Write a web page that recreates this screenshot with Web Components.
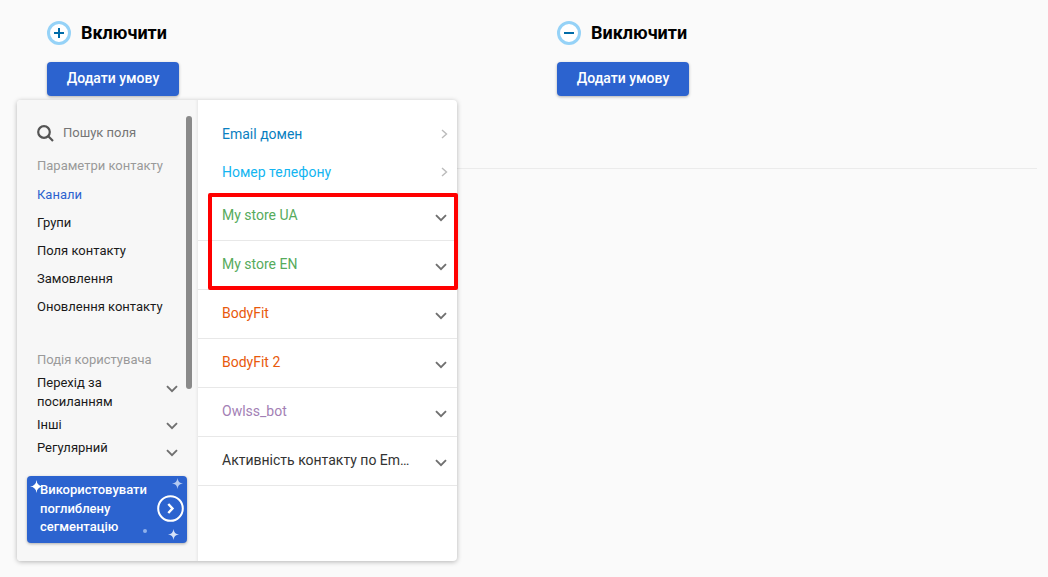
<!DOCTYPE html>
<html lang="uk"><head><meta charset="utf-8"><title>Сегмент</title>
<style>
html,body{margin:0;padding:0}
body{width:1048px;height:577px;overflow:hidden;background:#fafafa;font-family:Roboto,"Liberation Sans",sans-serif;position:relative}
</style></head><body>
<seg-page>
  <seg-column kind="plus" slot="a" label="Включити"></seg-column>
  <seg-column kind="minus" slot="b" label="Виключити"></seg-column>
</seg-page>
<field-menu></field-menu>
<script>
const chev=(c='')=>`<svg class="${c}" width="12" height="8" viewBox="0 0 12 8" fill="none"><path d="M1 1.2 6 6.2 11 1.2" stroke="#707070" stroke-width="1.9"/></svg>`;
class SegPage extends HTMLElement{constructor(){super();this.attachShadow({mode:'open'}).innerHTML=`<style>
:host{display:block;height:577px;box-sizing:border-box;padding:21px 11px 0 47px}
.cols{display:grid;grid-template-columns:510px 1fr;height:147px;border-bottom:1px solid #ebebeb}
</style><div class="cols"><slot name="a"></slot><slot name="b"></slot></div>`}}
customElements.define('seg-page',SegPage);
class SegColumn extends HTMLElement{constructor(){super();const k=this.getAttribute('kind');this.attachShadow({mode:'open'}).innerHTML=`<style>
:host{display:block}
.head{display:flex;align-items:center;gap:10px;height:24px;font-size:18px;font-weight:700;color:#000}
.head span{position:relative;top:-1px}
.ic{width:24px;height:24px;flex:none;display:block}
button{display:block;margin-top:17px;width:132px;height:34px;border:0;border-radius:4px;background:#2c63cf;color:#fff;font:500 14px Roboto,sans-serif;box-shadow:0 1px 3px rgba(0,0,0,.3);padding:0 0 2px}
</style><div class="head"><svg class="ic" viewBox="0 0 24 24"><circle cx="12" cy="12" r="10.5" fill="#fff" stroke="#95d2f7" stroke-width="3"/><path d="${k==='plus'?'M7 12h10M12 7v10':'M7 12h10'}" stroke="#006ba8" stroke-width="2" fill="none"/></svg><span>${this.getAttribute('label')}</span></div><button>Додати умову</button>`}}
customElements.define('seg-column',SegColumn);
class FieldMenu extends HTMLElement{constructor(){super();this.attachShadow({mode:'open'}).innerHTML=`<style>
:host{display:block;position:absolute;left:17px;top:100px;width:440px;height:461px;border-radius:4px;background:#fff;box-shadow:0 1px 5px rgba(0,0,0,.28);font:14px/1.35 Roboto,sans-serif;color:#1a1a1a}
.wrap{display:flex;height:100%;border-radius:4px;overflow:hidden}
.left{width:181px;flex:none;box-sizing:border-box;background:#f7f7f7;box-shadow:inset -3px 0 3px -2px rgba(0,0,0,.07);padding:0 0 0 20px;position:relative}
.right{flex:1;display:flex;flex-direction:column;padding-top:15px}
.search{display:flex;align-items:center;gap:9px;height:22px;margin-top:22px;color:#757575;font-size:13px}
.cap{color:#9a9a9a;font-size:13px;line-height:18px}
.cap.a{margin-top:13px}
.cap.b{margin-top:35px}
.it{font-size:13px;line-height:18px;height:18px;margin-top:10px;color:#1a1a1a}
.it.on{color:#2c63cf;margin-top:11px}
.ex{display:flex;justify-content:space-between;align-items:flex-start;font-size:13px;line-height:19px;width:141px;color:#1a1a1a}
.ex.f{margin-top:4px}
.ex+.ex{margin-top:4px}
.ex svg{flex:none}
.m12{margin-top:12px}.m7{margin-top:7px}.m11{margin-top:11px}
.bar{position:absolute;right:6px;top:16px;width:6px;height:273px;border-radius:3px;background:#8a8a8a}
.promo{position:absolute;left:10px;top:376px;width:160px;height:67px;box-sizing:border-box;border-radius:4px;background:#2c63cf;color:#fff;font:500 13px/18.5px Roboto,sans-serif;padding:5px 0 0 13px;box-shadow:0 1px 3px rgba(0,0,0,.3)}
.promo svg{position:absolute}
.row{display:flex;align-items:center;justify-content:space-between;height:38px;padding:0 9px 0 24px}
.row span{white-space:nowrap}
.acc{height:48px;border-bottom:1px solid #e8e8e8;padding:0 10px 0 24px;align-items:flex-start}
.acc span{line-height:20px;margin-top:13px}
.acc svg{margin-top:22px}
.acc.first{height:49px}
.acc.first span{margin-top:14px}
.acc.first svg{margin-top:23px}
.mark{position:absolute;left:191px;top:93px;width:250px;height:97px;box-sizing:border-box;border:4px solid #f00;border-radius:2px;pointer-events:none}
</style><div class="wrap"><div class="left">
<div class="search"><svg width="17" height="17" viewBox="0 0 17 17" fill="none" stroke="#555" stroke-width="2.2"><circle cx="7" cy="7" r="5.8"/><path d="M11.3 11.3 16 16"/></svg><span>Пошук поля</span></div>
<div class="cap a">Параметри контакту</div>
<div class="it on">Канали</div><div class="it">Групи</div><div class="it">Поля контакту</div><div class="it">Замовлення</div><div class="it">Оновлення контакту</div>
<div class="cap b">Подія користувача</div>
<div class="ex f"><span>Перехід за<br>посиланням</span>${chev('m12')}</div>
<div class="ex"><span>Інші</span>${chev('m7')}</div>
<div class="ex"><span>Регулярний</span>${chev('m11')}</div>
<div class="bar"></div>
<div class="promo">Використовувати<br>поглиблену<br>сегментацію
<svg style="left:130px;top:19px" width="27" height="27" viewBox="0 0 27 27" fill="none" stroke="#fff"><circle cx="13.5" cy="13.5" r="12.3" stroke-width="2"/><path d="M11.3 9 15.5 13.5 11.3 18" stroke-width="2.4"/></svg>
<svg style="left:3px;top:4px" width="13" height="13" viewBox="0 0 12 12"><path d="M6 0Q6.5 5.5 12 6 6.5 6.5 6 12 5.5 6.5 0 6 5.5 5.5 6 0Z" fill="#fff"/></svg>
<svg style="left:145px;top:2px" width="11" height="11" viewBox="0 0 12 12"><path d="M6 0Q6.5 5.5 12 6 6.5 6.5 6 12 5.5 6.5 0 6 5.5 5.5 6 0Z" fill="#b5cbf2"/></svg>
<svg style="left:141px;top:53px" width="11" height="11" viewBox="0 0 12 12"><path d="M6 0Q6.5 5.5 12 6 6.5 6.5 6 12 5.5 6.5 0 6 5.5 5.5 6 0Z" fill="#d5e2f8"/></svg>
<svg style="left:116px;top:53px" width="4" height="4" viewBox="0 0 4 4"><circle cx="2" cy="2" r="2" fill="#8fb0ea"/></svg>
</div></div>
<div class="right">
<div class="row"><span style="color:#0a7fc1">Email домен</span><svg width="7" height="10" viewBox="0 0 7 10" fill="none"><path d="M1 1 5.5 5 1 9" stroke="#bbb" stroke-width="1.4"/></svg></div>
<div class="row"><span style="color:#13b5f1">Номер телефону</span><svg width="7" height="10" viewBox="0 0 7 10" fill="none"><path d="M1 1 5.5 5 1 9" stroke="#bbb" stroke-width="1.4"/></svg></div>
<div class="row acc first"><span style="color:#56ab5c">My store UA</span>${chev()}</div>
<div class="row acc"><span style="color:#56ab5c">My store EN</span>${chev()}</div>
<div class="row acc"><span style="color:#e8590c">BodyFit</span>${chev()}</div>
<div class="row acc"><span style="color:#e8590c">BodyFit 2</span>${chev()}</div>
<div class="row acc"><span style="color:#a37fb5">Owlss_bot</span>${chev()}</div>
<div class="row acc"><span style="color:#333">Активність контакту по Em…</span>${chev()}</div>
</div></div><div class="mark"></div>`}}
customElements.define('field-menu',FieldMenu);
</script>
</body></html>
